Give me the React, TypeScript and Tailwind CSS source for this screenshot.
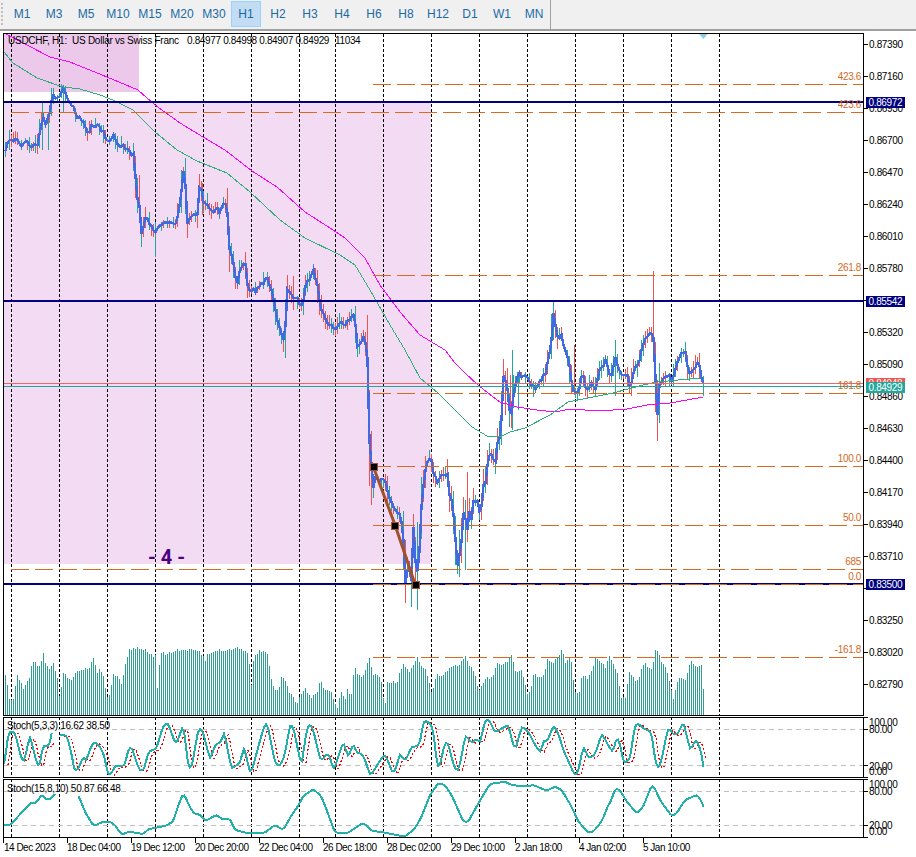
type Pt = [number, number];

const FONT = "font-['Liberation_Sans',Arial,sans-serif]";
const TABS = ["M1", "M3", "M5", "M10", "M15", "M20", "M30", "H1", "H2", "H3", "H4", "H6", "H8", "H12", "D1", "W1", "MN"];
const GRID_X = [11, 59, 107, 155, 203, 251, 299, 335, 383, 431, 479, 527, 575, 623, 671, 719];
const TEAL = "#26a69a";
const RED = "#ef5350";
const FIB = "#dc6a1e";
const NAVY = "#000080";

// maps points read from the zoomed crops back to page pixels
const z = (ox: number, oy: number, pts: Pt[]): Pt[] => pts.map(([x, y]) => [ox + x / 3, oy + y / 3]);

const CLOSE: Pt[] = [
  [4, 155], [6, 147], [10, 138], [17, 140], [20, 147], [25, 142], [30, 147], [37, 143], [42, 117], [45, 123], [50, 113], [52, 93],
  [58, 100], [63, 90], [67, 100], [72, 107], [77, 117], [83, 123], [87, 133], [92, 125], [100, 127], [107, 140], [113, 137], [118, 143],
  [127, 150], [134, 157], [135, 175], [136, 193], [139, 207], [140, 222], [142, 243], [143, 225], [146, 213], [148, 220], [150, 228],
  [155, 230], [163, 223], [170, 221], [175, 223], [178, 215], [182, 183], [183, 170], [185, 187], [187, 223], [192, 217], [197, 213],
  [199, 188], [202, 193], [203, 203], [207, 203], [210, 212], [217, 210], [218, 217], [222, 205], [224, 200], [227, 213], [229, 250],
  [232, 257], [235, 277], [237, 283], [240, 267], [245, 265], [247, 283], [250, 293], [260, 287], [266, 277], [270, 287], [273, 300],
  [277, 320], [282, 340], [284, 340], [287, 290], [293, 297], [300, 303], [302, 309], [305, 285], [308, 280], [313, 270], [316, 280],
  [320, 305], [325, 320], [330, 325], [335, 327], [340, 320], [345, 325], [350, 318], [354, 315], [357, 345], [360, 345], [362, 335],
  [365, 345], [367, 360], [368, 403], [369, 440], [371, 465], [372, 493], [375, 475], [378, 482], [385, 480], [388, 493], [392, 507],
  [396, 513], [400, 512], [402, 530], [404, 550], [405, 582], [408, 563], [411, 582], [413, 525], [416, 580], [419, 550], [420, 520],
  [422, 493], [424, 477], [427, 460], [430, 456], [433, 475], [437, 482], [441, 473], [447, 473], [449, 497], [452, 500], [454, 527],
  [457, 565], [460, 552], [462, 527], [464, 497], [466, 543], [469, 510], [470, 527], [473, 500], [478, 500], [480, 523], [482, 487],
  [486, 480], [488, 452], [492, 457], [495, 462], [498, 432], [500, 440], [503, 377], [507, 387], [510, 423], [513, 393], [518, 375],
  [528, 377], [533, 388], [540, 383], [545, 373], [550, 350], [553, 313], [557, 337], [562, 335], [563, 347], [568, 360], [573, 392],
  [578, 392], [582, 373], [586, 393], [590, 382], [595, 387], [598, 373], [605, 360], [610, 377], [615, 357], [620, 377], [627, 377],
  [630, 388], [633, 370], [637, 367], [642, 348], [645, 338], [649, 333], [653, 338], [655, 377], [657, 415], [659, 383], [663, 380],
  [667, 375], [672, 380], [675, 368], [678, 360], [682, 351], [685, 352], [688, 375], [693, 370], [698, 360], [700, 373], [703, 385],
];

const MAGENTA: Pt[] = [
  [4, 32], [6, 34], [50, 57], [70, 62], [107, 77], [138, 90], [155, 105], [180, 123], [203, 137], [225, 150], [252, 171], [277, 187],
  [305, 212], [330, 228], [345, 238], [365, 258], [380, 285], [400, 312], [420, 335], [445, 350], [455, 363], [465, 373], [478, 385],
  [488, 393], [500, 402], [517, 407], [537, 410], [555, 412], [570, 409], [600, 411], [627, 409], [647, 405], [670, 403], [687, 400], [703, 397],
];

const GREEN: Pt[] = [
  [4, 52], [13, 63], [37, 78], [63, 87], [80, 89], [100, 95], [113, 100], [133, 110], [155, 132], [177, 150], [197, 161], [227, 173],
  [250, 192], [280, 220], [305, 238], [340, 255], [355, 265], [370, 290], [390, 325], [405, 350], [420, 378], [438, 393], [455, 410],
  [472, 427], [487, 436], [500, 437], [510, 432], [525, 428], [550, 415], [568, 402], [613, 393], [643, 385], [657, 382], [700, 378],
];

// long wicks that stand out in the picture: x, top, bottom, colour
const BIG_WICKS: [number, number, number, string][] = [
  [653, 271, 340, RED], [657, 380, 441, RED], [659, 380, 423, TEAL], [405, 540, 603, RED], [417, 522, 610, TEAL], [371, 431, 505, RED],
  [467, 472, 530, RED], [459, 530, 577, TEAL], [465, 500, 570, TEAL], [155, 228, 257, TEAL], [139, 175, 210, RED], [202, 183, 215, RED],
  [293, 276, 310, RED], [553, 302, 340, TEAL], [63, 85, 112, TEAL], [42, 103, 150, TEAL], [48, 112, 150, TEAL], [512, 350, 430, TEAL],
  [505, 372, 415, RED], [510, 375, 412, RED], [518, 372, 410, TEAL], [285, 300, 358, TEAL], [574, 345, 395, RED], [615, 340, 396, TEAL],
];

const VOLUME: Pt[] = [
  ...z(0, 640, [
    [4, 190], [16, 100], [28, 180], [38, 180], [50, 105], [60, 125], [70, 145], [80, 130], [90, 100], [95, 65], [105, 65], [110, 75], [120, 80],
    [130, 37], [135, 65], [145, 90], [160, 70], [170, 110], [178, 175], [190, 95], [200, 115], [215, 125], [220, 105], [235, 95], [250, 85],
    [265, 85], [280, 55], [290, 100], [300, 85], [310, 115], [318, 170], [325, 175], [340, 100], [350, 110], [365, 130], [375, 70], [388, 27],
    [410, 25], [425, 25], [440, 35], [465, 50], [469, 170], [480, 37], [500, 42], [520, 30], [540, 30], [560, 30], [590, 30], [608, 45],
    [612, 70], [620, 40], [640, 35], [665, 30], [690, 30], [710, 22], [730, 30], [745, 35], [752, 150], [760, 50], [775, 35], [800, 35],
    [815, 130], [825, 150], [835, 150], [845, 105], [855, 120], [865, 150], [880, 175], [890, 190], [900, 165],
  ]),
  ...z(305, 640, [
    [0, 145], [15, 175], [25, 160], [35, 160], [45, 115], [55, 145], [70, 155], [80, 155], [88, 190], [97, 205], [105, 155], [120, 175], [127, 145],
    [137, 175], [147, 75], [155, 100], [170, 110], [180, 85], [192, 55], [205, 105], [220, 110], [230, 130], [238, 215], [245, 130], [255, 125],
    [275, 130], [285, 90], [295, 70], [310, 95], [325, 75], [335, 55], [345, 70], [360, 90], [368, 110], [378, 155], [385, 145], [395, 100],
    [410, 110], [420, 95], [440, 80], [465, 70], [480, 45], [490, 75], [505, 92], [520, 150], [530, 135], [545, 108], [560, 115], [575, 70],
    [590, 70], [605, 65], [620, 45], [630, 95], [650, 95], [665, 160], [675, 155], [685, 100], [700, 115], [715, 105], [725, 60], [745, 65],
    [760, 45], [770, 30], [780, 70], [795, 45], [808, 155], [820, 165], [830, 100], [845, 115], [860, 90], [870, 55], [885, 65], [900, 80], [915, 40],
  ]),
  ...z(610, 640, [
    [3, 60], [10, 80], [20, 95], [33, 170], [45, 170], [57, 95], [65, 110], [75, 120], [85, 120], [95, 78], [105, 68], [115, 85], [125, 85],
    [135, 32], [142, 30], [155, 70], [170, 90], [180, 140], [190, 175], [197, 145], [205, 115], [215, 115], [225, 120], [240, 60], [250, 70],
    [260, 80], [270, 80], [275, 65], [280, 162],
  ]),
];

const STOCH_A: Pt[] = [
  ...z(0, 640, [
    [12, 380], [20, 320], [25, 275], [45, 275], [55, 320], [70, 375], [90, 285], [105, 350], [118, 390], [128, 315], [148, 320], [155, 280],
  ]),
];
const STOCH_B: Pt[] = [
  ...z(0, 640, [
    [180, 285], [200, 285], [215, 340], [222, 390], [235, 390], [250, 345], [258, 365], [272, 320], [285, 305], [300, 320], [315, 350], [322, 405],
    [332, 405], [345, 378], [375, 378], [385, 325], [395, 320], [410, 370], [420, 392], [432, 390], [445, 335], [470, 325], [490, 255], [505, 250],
    [525, 310], [535, 300], [550, 247], [565, 385], [575, 385], [595, 265], [608, 270], [630, 360], [645, 315], [665, 305], [672, 272], [695, 390],
    [705, 378], [720, 370], [733, 315], [748, 398], [755, 395], [775, 320], [795, 250], [802, 250], [825, 370], [840, 378], [855, 345], [870, 252],
    [880, 260], [905, 385],
  ]),
  ...z(305, 640, [
    [0, 295], [10, 255], [20, 255], [30, 290], [45, 358], [55, 358], [65, 340], [75, 350], [85, 395], [100, 350], [115, 303], [130, 355], [145, 307],
    [155, 340], [165, 340], [175, 345], [195, 405], [205, 395], [220, 370], [240, 340], [262, 398], [270, 395], [285, 340], [300, 365], [320, 320],
    [335, 320], [345, 310], [355, 240], [375, 250], [385, 265], [395, 375], [402, 390], [420, 305], [430, 310], [445, 375], [458, 398], [470, 350],
    [480, 282], [500, 310], [515, 295], [525, 310], [540, 240], [552, 237], [570, 278], [585, 268], [610, 255], [630, 335], [650, 258], [670, 275],
    [685, 305], [708, 343], [715, 295], [725, 310], [745, 255], [760, 280], [775, 330], [810, 408], [820, 395], [835, 315], [850, 355], [870, 345],
    [890, 280], [915, 325],
  ]),
  ...z(610, 640, [
    [3, 335], [10, 335], [20, 288], [30, 310], [40, 370], [60, 358], [75, 250], [90, 255], [100, 265], [125, 275], [135, 365], [142, 385], [150, 380],
    [175, 260], [190, 285], [205, 280], [220, 243], [240, 330], [260, 297], [275, 340], [280, 382],
  ]),
];

const SLOW_A: Pt[] = z(0, 640, [[12, 555], [30, 555], [65, 518], [90, 490], [110, 488], [125, 463], [140, 480], [150, 478], [165, 462]]);
const SLOW_B: Pt[] = [
  ...z(0, 640, [
    [235, 465], [255, 515], [280, 558], [310, 545], [330, 545], [345, 555], [365, 585], [385, 575], [430, 582], [445, 568], [495, 558], [520, 545],
    [530, 510], [550, 457], [570, 503], [585, 523], [600, 523], [615, 543], [650, 525], [665, 537], [690, 537], [705, 570], [735, 578], [795, 578],
    [825, 555], [850, 570], [875, 525], [890, 505], [912, 465],
  ]),
  ...z(305, 640, [
    [0, 465], [25, 447], [50, 470], [65, 510], [90, 578], [130, 578], [175, 548], [200, 572], [240, 578], [300, 590], [330, 565], [350, 530], [375, 465],
    [400, 430], [420, 435], [440, 465], [475, 545], [490, 545], [520, 490], [555, 432], [600, 425], [620, 435], [660, 440], [685, 435], [725, 452],
    [750, 440], [770, 450], [800, 500], [820, 545], [850, 577], [865, 575], [890, 545], [912, 490],
  ]),
  ...z(610, 640, [
    [3, 485], [15, 445], [30, 450], [50, 485], [82, 520], [100, 500], [125, 435], [135, 445], [150, 480], [185, 528], [200, 520], [225, 480], [260, 465],
    [270, 475], [280, 500],
  ]),
];

const PRICES: [string, number][] = [
  ["0.87390", 44], ["0.87160", 76], ["0.86930", 108], ["0.86700", 140], ["0.86470", 172], ["0.86240", 204], ["0.86010", 236], ["0.85780", 268],
  ["0.85320", 332], ["0.85090", 364], ["0.84860", 396], ["0.84630", 428], ["0.84400", 460], ["0.84170", 492], ["0.83940", 524], ["0.83710", 556],
  ["0.83250", 620], ["0.83020", 652], ["0.82790", 684],
];

const FIB_LINES: { y: number; from: number; label: string; labelY: number }[] = [
  { y: 84, from: 373, label: "423.6", labelY: 76 },
  { y: 112, from: 11, label: "423.6", labelY: 104 },
  { y: 275, from: 373, label: "261.8", labelY: 267 },
  { y: 393, from: 373, label: "161.8", labelY: 385 },
  { y: 466, from: 373, label: "100.0", labelY: 458 },
  { y: 525, from: 373, label: "50.0", labelY: 517 },
  { y: 569, from: 11, label: "685", labelY: 561 },
  { y: 584, from: 373, label: "0.0", labelY: 576 },
  { y: 657, from: 373, label: "-161.8", labelY: 649 },
];

const TIMES: [string, number][] = [
  ["14 Dec 2023", 3], ["18 Dec 04:00", 67], ["19 Dec 12:00", 131], ["20 Dec 20:00", 195], ["22 Dec 04:00", 259], ["26 Dec 18:00", 323],
  ["28 Dec 02:00", 387], ["29 Dec 10:00", 451], ["2 Jan 18:00", 515], ["4 Jan 02:00", 579], ["5 Jan 10:00", 643],
];

const rnd = (n: number) => {
  const s = Math.sin(n * 12.9898) * 43758.5453;
  return s - Math.floor(s);
};

const at = (pts: Pt[], x: number) => {
  if (x <= pts[0][0]) return pts[0][1];
  for (let i = 1; i < pts.length; i++) {
    if (x <= pts[i][0]) {
      const [x0, y0] = pts[i - 1];
      const [x1, y1] = pts[i];
      return y0 + ((y1 - y0) * (x - x0)) / (x1 - x0 || 1);
    }
  }
  return pts[pts.length - 1][1];
};

const line = (pts: Pt[]) => pts.map(([x, y]) => `${x.toFixed(1)},${y.toFixed(1)}`).join(" ");

// resamples a traced curve bar by bar and rounds its corners a little
const smooth = (pts: Pt[]): Pt[] => {
  const out: Pt[] = [];
  const end = pts[pts.length - 1][0];
  for (let x = pts[0][0]; x < end; x += 2) {
    out.push([x, (at(pts, x - 2) + 4 * at(pts, x) + at(pts, x + 2)) / 6]);
  }
  out.push(pts[pts.length - 1]);
  return out;
};

const BARS: number[] = [];
for (let x = 5; x <= 703; x += 2) BARS.push(x);

const closeY = (x: number) => at(CLOSE, x) + (rnd(x) - 0.5) * 5;

function Wicks() {
  let red = "";
  let teal = "";
  BARS.forEach((x) => {
    if (rnd(x + 5) < 0.2) return;
    const y = at(CLOSE, x);
    const slope = Math.abs(at(CLOSE, x + 2) - at(CLOSE, x - 2));
    const top = y - 1 - rnd(x + 1) * 7 - slope * 0.4;
    const bottom = y + 1 + rnd(x + 2) * 7 + slope * 0.4;
    const d = `M${x + 0.5} ${top.toFixed(0)}V${bottom.toFixed(0)}`;
    if (rnd(x + 3) > 0.5) red += d;
    else teal += d;
  });
  return (
    <>
      <path d={red} stroke={RED} strokeWidth="1" fill="none" shapeRendering="crispEdges" />
      <path d={teal} stroke={TEAL} strokeWidth="1" fill="none" shapeRendering="crispEdges" />
      {BIG_WICKS.map(([x, t, b, c]) => (
        <line key={`${x}-${t}`} x1={x + 0.5} x2={x + 0.5} y1={t} y2={b} stroke={c} strokeWidth="1" shapeRendering="crispEdges" />
      ))}
    </>
  );
}

function GridLines({ y1, y2 }: { y1: number; y2: number }) {
  return (
    <>
      {GRID_X.map((x) => (
        <line key={x} x1={x + 0.5} x2={x + 0.5} y1={y1} y2={y2} stroke="#000" strokeWidth="1" strokeDasharray="3 2" shapeRendering="crispEdges" />
      ))}
    </>
  );
}

function Pane({ top, height, className, children }: { top: number; height: number; className: string; children: React.ReactNode }) {
  return (
    <div className={`box-border w-[861px] overflow-hidden border border-black ${className}`}>
      <svg width="859" height={height - 2} viewBox={`4 ${top + 1} 859 ${height - 2}`} className="block">
        {children}
      </svg>
    </div>
  );
}

function Axis({ top, height, children }: { top: number; height: number; children: React.ReactNode }) {
  return (
    <svg width="52" height={height} viewBox={`864 ${top} 52 ${height}`} className="block">
      {children}
    </svg>
  );
}

function Tick({ y, label, textY }: { y: number; label?: string; textY?: number }) {
  return (
    <>
      <line x1="864" x2="868" y1={y + 0.5} y2={y + 0.5} stroke="#000" shapeRendering="crispEdges" />
      {label && (
        <text x="869" y={(textY ?? y) + 3.5} fontSize="10" letterSpacing="-0.35" fill="#000">
          {label}
        </text>
      )}
    </>
  );
}

function PriceTag({ y, label, bg }: { y: number; label: string; bg: string }) {
  return (
    <>
      <rect x="866" y={y - 5} width="39" height="11" fill={bg} shapeRendering="crispEdges" />
      <text x="868.5" y={y + 4} fontSize="10" letterSpacing="-0.35" fill="#fff">
        {label}
      </text>
    </>
  );
}

function HLine({ y, color, width = 1 }: { y: number; color: string; width?: number }) {
  return <line x1="4" x2="863" y1={y} y2={y} stroke={color} strokeWidth={width} shapeRendering="crispEdges" />;
}

function Anchor({ x, y }: { x: number; y: number }) {
  return <rect x={x - 3.5} y={y - 3.5} width="7" height="7" fill="#000" stroke="#a0522d" strokeWidth="1" shapeRendering="crispEdges" />;
}

function MainChart() {
  const volume = BARS.map((x) => `M${x + 0.5} ${(at(VOLUME, x) + (rnd(x + 7) - 0.5) * 3).toFixed(0)}V715`).join("");
  const closes: Pt[] = BARS.map((x) => [x + 0.5, closeY(x)]);
  return (
    <Pane top={33} height={683} className="h-[683px]">
      <rect x="4" y="34" width="135" height="58" fill="#ecc8ea" />
      <rect x="4" y="102" width="427" height="462" fill="#f4dbf4" />
      <GridLines y1={34} y2={715} />
      <path d={volume} stroke="#2f9f95" strokeWidth="1" fill="none" shapeRendering="crispEdges" />
      <Wicks />
      <polyline points={line(closes)} fill="none" stroke="#4169e1" strokeWidth="2.4" shapeRendering="crispEdges" />
      <polyline points={line(MAGENTA)} fill="none" stroke="#ff00ff" strokeWidth="1" shapeRendering="crispEdges" />
      <polyline points={line(GREEN)} fill="none" stroke="#2eae78" strokeWidth="1" shapeRendering="crispEdges" />
      <HLine y={102} color={NAVY} width={2} />
      <HLine y={301} color={NAVY} width={2} />
      <HLine y={584} color={NAVY} width={2} />
      <HLine y={383.5} color="#e8696a" />
      <HLine y={386.5} color={TEAL} />
      {FIB_LINES.map((f) => (
        <line key={f.y} x1={f.from} x2="863" y1={f.y + 0.5} y2={f.y + 0.5} stroke={FIB} strokeWidth="1" strokeDasharray="18 6" shapeRendering="crispEdges" />
      ))}
      <polyline points="373,466 395,525 415,584" fill="none" stroke="#a0522d" strokeWidth="3" />
      <Anchor x={373.5} y={466.5} />
      <Anchor x={394.5} y={525.5} />
      <Anchor x={415.5} y={584.5} />
      {FIB_LINES.map((f) => (
        <text key={f.y} x="861" y={f.labelY + 3.5} fontSize="10" letterSpacing="-0.35" fill="#d2691e" textAnchor="end">
          {f.label}
        </text>
      ))}
      <polygon points="699,34 707.5,34 703.5,39" fill="#87ceeb" />
      <text x="148" y="564" fontSize="20" fontWeight="700" fill="#4b0082" xmlSpace="preserve" fontFamily="Roboto, sans-serif">
        - 4 -
      </text>
      <text x="8" y="44" fontSize="10" letterSpacing="-0.25" fill="#000" xmlSpace="preserve">
        USDCHF, H1:  US Dollar vs Swiss Franc
      </text>
      <text x="187" y="44" fontSize="10" letterSpacing="-0.35" fill="#000">
        0.84977 0.84998 0.84907 0.84929
      </text>
      <text x="335" y="44" fontSize="10" letterSpacing="-0.35" fill="#000">
        11034
      </text>
    </Pane>
  );
}

function StochPane({
  top,
  height,
  className,
  title,
  levels,
  segments,
  signal,
  titleY,
}: {
  top: number;
  height: number;
  className: string;
  title: string;
  levels: number[];
  segments: Pt[][];
  signal: boolean;
  titleY: number;
}) {
  const curves = segments.map(smooth);
  return (
    <Pane top={top} height={height} className={className}>
      <GridLines y1={top} y2={top + height} />
      {levels.map((y) => (
        <line key={y} x1="4" x2="863" y1={y + 0.5} y2={y + 0.5} stroke="#c0c0c0" strokeDasharray="5 4" shapeRendering="crispEdges" />
      ))}
      {signal &&
        curves.map((s, i) => (
          <polyline key={i} points={line(s.slice(0, -1).map(([x, y]) => [x + 4, y + 1] as Pt))} fill="none" stroke="#ff0000" strokeWidth="1.2" strokeDasharray="2 2" shapeRendering="crispEdges" />
        ))}
      {curves.map((s, i) => (
        <polyline key={i} points={line(s)} fill="none" stroke="#20b2aa" strokeWidth="2" shapeRendering="crispEdges" />
      ))}
      <text x="7" y={titleY} fontSize="10" letterSpacing="-0.3" fill="#000">
        {title}
      </text>
    </Pane>
  );
}

export default function App() {
  return (
    <div className={`h-[857px] w-[916px] overflow-hidden bg-white ${FONT}`}>
      <div className="flex h-[31px] items-start border-b-2 border-[#a0a0a0] bg-[#f0f0f0]">
        <div className="ml-[1px] mt-[3px] h-[22px] w-[2px] border-l-2 border-dotted border-[#c0c0c0]" />
        <div className="ml-[3px] flex pt-[1px]">
          {TABS.map((t) => (
            <div
              key={t}
              className={
                t === "H1"
                  ? "mx-[1px] flex h-[26px] w-[30px] items-center justify-center border border-[#99d1ff] bg-[#c1dcf3] text-[12px] text-[#1b6aa5]"
                  : "flex h-[26px] w-8 items-center justify-center text-[12px] text-[#1b6aa5]"
              }
            >
              {t}
            </div>
          ))}
        </div>
        <div className="h-[29px] w-[1px] bg-[#a0a0a0]" />
      </div>

      <div className="mt-[2px] flex flex-col pl-[3px]">
        <div className="flex">
          <MainChart />
          <Axis top={33} height={683}>
            {PRICES.map(([p, y]) => (
              <Tick key={p} y={y} label={p} />
            ))}
            <Tick y={300} />
            <Tick y={588} />
            <PriceTag y={102} label="0.86972" bg={NAVY} />
            <PriceTag y={301} label="0.85542" bg={NAVY} />
            <PriceTag y={584} label="0.83500" bg={NAVY} />
            <PriceTag y={383} label="0.84948" bg={RED} />
            <PriceTag y={387} label="0.84929" bg={TEAL} />
          </Axis>
        </div>

        <div className="mt-[1px] flex">
          <StochPane
            top={717}
            height={61}
            className="h-[61px]"
            title="Stoch(5,3,3) 16.62 38.50"
            levels={[729, 765]}
            segments={[STOCH_A, STOCH_B]}
            signal
            titleY={729}
          />
          <Axis top={717} height={61}>
            <Tick y={717} label="100.00" textY={722} />
            <Tick y={729} label="80.00" />
            <Tick y={765} label="20.00" textY={766} />
            <Tick y={777} label="0.00" textY={771} />
          </Axis>
        </div>

        <div className="mt-[1px] flex">
          <StochPane
            top={779}
            height={59}
            className="h-[59px]"
            title="Stoch(15,8,10) 50.87 66.48"
            levels={[791, 825]}
            segments={[SLOW_A, SLOW_B]}
            signal={false}
            titleY={792}
          />
          <Axis top={779} height={59}>
            <Tick y={779} label="100.00" textY={784} />
            <Tick y={791} label="80.00" />
            <Tick y={825} label="20.00" />
            <Tick y={837} label="0.00" textY={831} />
          </Axis>
        </div>

        <svg width="913" height="19" viewBox="3 838 913 19" className="block">
          {TIMES.map(([t, x]) => (
            <g key={t}>
              <line x1={x + 0.5} x2={x + 0.5} y1="838" y2="843" stroke="#000" shapeRendering="crispEdges" />
              <text x={x + (x === 3 ? 1 : 0)} y="851" fontSize="10" letterSpacing="-0.5" fill="#000">
                {t}
              </text>
            </g>
          ))}
        </svg>
      </div>
    </div>
  );
}
